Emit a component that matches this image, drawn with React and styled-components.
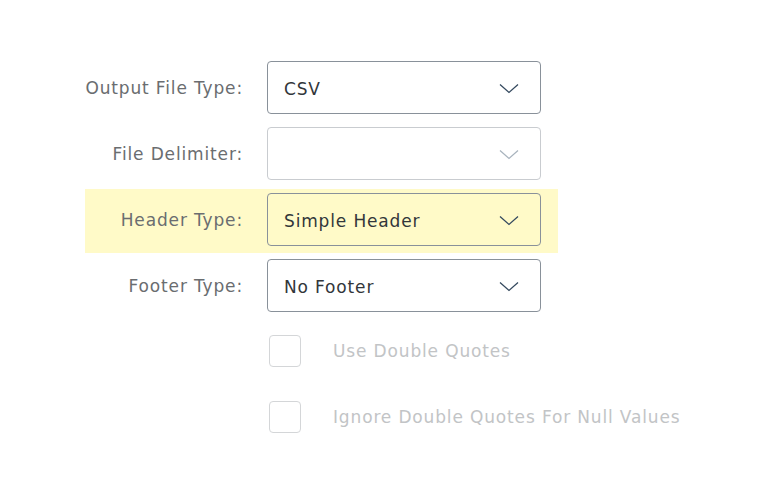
import styled, { createGlobalStyle } from "styled-components";

const GlobalStyle = createGlobalStyle`
  body {
    margin: 0;
    background: #ffffff;
    font-family: "DejaVu Sans", "Noto Sans", sans-serif;
    letter-spacing: 0.85px;
  }
`;

const Form = styled.div`
  display: flex;
  flex-direction: column;
  gap: 2px;
  padding-top: 57px;
  margin-left: 85px;
  width: 473px;
`;

const Row = styled.div`
  display: flex;
  align-items: flex-start;
  gap: 24px;
  height: 64px;
  box-sizing: border-box;
  padding-top: ${(p) => p.$top || 4}px;
  background: ${(p) => (p.$highlight ? "#fffac8" : "transparent")};
`;

const Label = styled.div`
  width: 158px;
  flex-shrink: 0;
  text-align: right;
  font-size: 17px;
  line-height: 54px;
  color: #6a6d70;
  white-space: nowrap;
`;

const Select = styled.div`
  width: 274px;
  height: 53px;
  box-sizing: border-box;
  border: 1px solid ${(p) => (p.$disabled ? "#c9ccd0" : "#89919a")};
  border-radius: 4px;
  background: ${(p) => (p.$highlight ? "#fffac8" : "#ffffff")};
  display: flex;
  align-items: center;
  justify-content: space-between;
  padding: 2px 21px 0 16px;
  font-size: 17px;
  color: #32363a;
`;

const Chevron = ({ color }) => (
  <svg width="20" height="11" viewBox="0 0 20 11">
    <path d="M1 1.5 L10 9.5 L19 1.5" fill="none" stroke={color} strokeWidth="1.3" />
  </svg>
);

const Check = styled.label`
  display: flex;
  align-items: center;
  gap: 32px;
  margin-left: 2px;
  font-size: 17px;
  color: #c2c4c6;
  white-space: nowrap;
`;

const Box = styled.span`
  width: 32px;
  height: 32px;
  flex-shrink: 0;
  box-sizing: border-box;
  border: 1px solid #d4d6d8;
  border-radius: 4px;
  background: #ffffff;
`;

const Spacer = styled.div`
  width: 158px;
  flex-shrink: 0;
`;

const selects = [
  { label: "Output File Type:", value: "CSV" },
  { label: "File Delimiter:", value: "", disabled: true },
  { label: "Header Type:", value: "Simple Header", highlight: true },
  { label: "Footer Type:", value: "No Footer" },
];

const checks = ["Use Double Quotes", "Ignore Double Quotes For Null Values"];

export default function App() {
  return (
    <>
      <GlobalStyle />
      <Form>
        {selects.map((s) => (
          <Row key={s.label} $highlight={s.highlight}>
            <Label>{s.label}</Label>
            <Select $disabled={s.disabled} $highlight={s.highlight}>
              <span>{s.value}</span>
              <Chevron color={s.disabled ? "#a9b4be" : "#354a5f"} />
            </Select>
          </Row>
        ))}
        {checks.map((c) => (
          <Row key={c} $top={14}>
            <Spacer />
            <Check>
              <Box />
              {c}
            </Check>
          </Row>
        ))}
      </Form>
    </>
  );
}
